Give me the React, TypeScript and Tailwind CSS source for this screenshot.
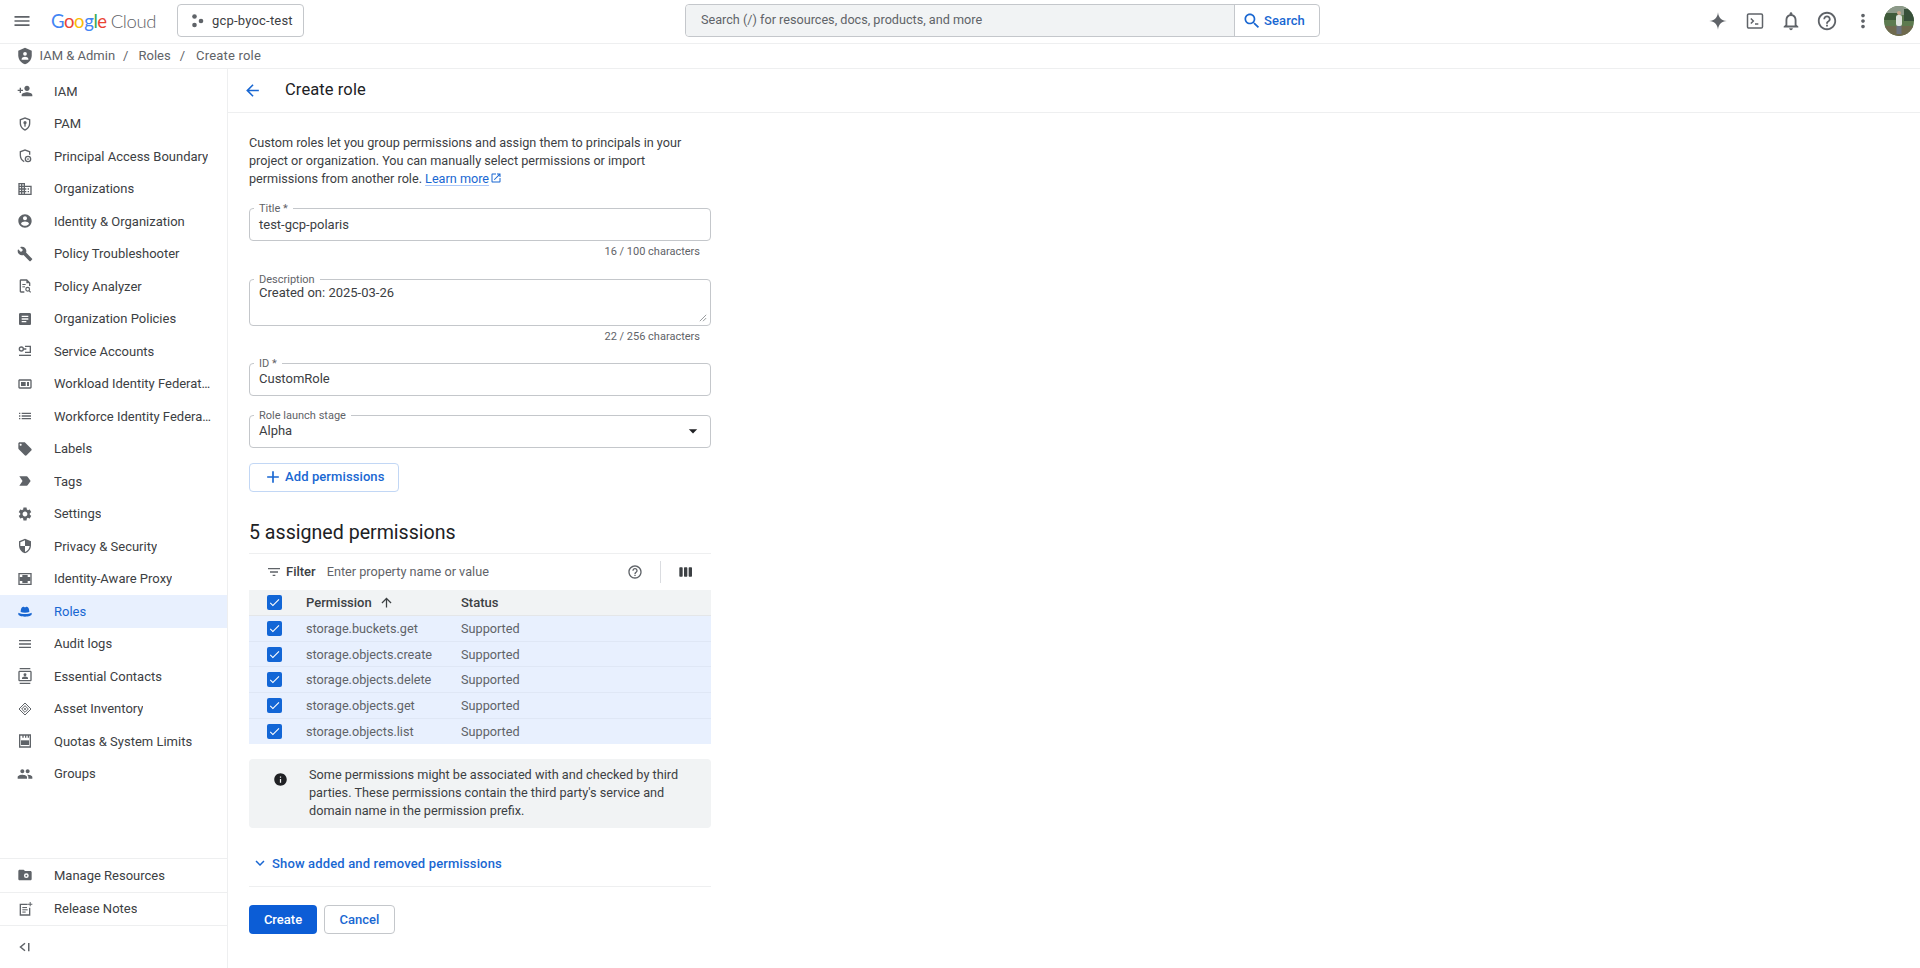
import type { ReactNode } from 'react'

const P = {
  menu: 'M3 18h18v-2H3v2zm0-5h18v-2H3v2zm0-7v2h18V6H3z',
  search: 'M15.5 14h-.79l-.28-.27C15.41 12.59 16 11.11 16 9.5 16 5.91 13.09 3 9.5 3S3 5.91 3 9.5 5.91 16 9.5 16c1.61 0 3.09-.59 4.23-1.57l.27.28v.79l5 4.99L20.49 19l-4.99-5zm-6 0C7.01 14 5 11.99 5 9.5S7.01 5 9.5 5 14 7.01 14 9.5 11.99 14 9.5 14z',
  spark: 'M12 1.5c.6 6.4 4.1 9.9 10.5 10.5-6.4.6-9.9 4.1-10.5 10.5C11.4 16.1 7.9 12.600 1.500 12 7.900 11.400 11.400 7.900 12 1.500z',
  bell: 'M12 22c1.1 0 2-.9 2-2h-4c0 1.1.9 2 2 2zm6-6v-5c0-3.07-1.63-5.64-4.5-6.32V4c0-.83-.67-1.5-1.5-1.5s-1.5.67-1.5 1.5v.68C7.64 5.36 6 7.92 6 11v5l-2 2v1h16v-1l-2-2zm-2 1H8v-6c0-2.48 1.51-4.5 4-4.5s4 2.02 4 4.5v6z',
  help: 'M11 18h2v-2h-2v2zm1-16C6.48 2 2 6.48 2 12s4.48 10 10 10 10-4.48 10-10S17.52 2 12 2zm0 18c-4.41 0-8-3.59-8-8s3.59-8 8-8 8 3.59 8 8-3.59 8-8 8zm0-14c-2.21 0-4 1.79-4 4h2c0-1.1.9-2 2-2s2 .9 2 2c0 2-3 1.750-3 5h2c0-2.250 3-2.500 3-5 0-2.210-1.790-4-4-4z',
  dots: 'M12 8c1.1 0 2-.9 2-2s-.9-2-2-2-2 .9-2 2 .9 2 2 2zm0 2c-1.1 0-2 .9-2 2s.9 2 2 2 2-.9 2-2-.9-2-2-2zm0 6c-1.1 0-2 .9-2 2s.9 2 2 2 2-.9 2-2-.9-2-2-2z',
  back: 'M20 11H7.83l5.59-5.59L12 4l-8 8 8 8 1.41-1.41L7.83 13H20v-2z',
  up: 'M4 12l1.41 1.41L11 7.83V20h2V7.83l5.58 5.59L20 12l-8-8-8 8z',
  add: 'M19 13h-6v6h-2v-6H5v-2h6V5h2v6h6v2z',
  external: 'M19 19H5V5h7V3H5c-1.11 0-2 .9-2 2v14c0 1.1.89 2 2 2h14c1.1 0 2-.9 2-2v-7h-2v7zM14 3v2h3.59l-9.83 9.83 1.41 1.41L19 6.41V10h2V3h-7z',
  filter: 'M10 18h4v-2h-4v2zM3 6v2h18V6H3zm3 7h12v-2H6v2z',
  columns: 'M6 5H3c-.55 0-1 .45-1 1v12c0 .55.45 1 1 1h3c.55 0 1-.45 1-1V6c0-.55-.45-1-1-1zm14 0h-3c-.55 0-1 .45-1 1v12c0 .55.45 1 1 1h3c.55 0 1-.45 1-1V6c0-.55-.45-1-1-1zm-7 0h-3c-.55 0-1 .45-1 1v12c0 .55.45 1 1 1h3c.55 0 1-.45 1-1V6c0-.55-.45-1-1-1z',
  info: 'M12 2C6.48 2 2 6.48 2 12s4.48 10 10 10 10-4.48 10-10S17.52 2 12 2zm1 15h-2v-6h2v6zm0-8h-2V7h2v2z',
  more: 'M16.59 8.59L12 13.17 7.41 8.59 6 10l6 6 6-6z',
  drop: 'M7 10l5 5 5-5z',
  check: 'M9 16.17L4.83 12l-1.41 1.41L9 19 21 7l-1.41-1.41z',
  personAdd: 'M15 12c2.21 0 4-1.79 4-4s-1.79-4-4-4-4 1.79-4 4 1.79 4 4 4zm-9-2V7H4v3H1v2h3v3h2v-3h3v-2H6zm9 4c-2.67 0-8 1.34-8 4v2h16v-2c0-2.66-5.33-4-8-4z',
  domain: 'M12 7V3H2v18h20V7H12zM6 19H4v-2h2v2zm0-4H4v-2h2v2zm0-4H4V9h2v2zm0-4H4V5h2v2zm4 12H8v-2h2v2zm0-4H8v-2h2v2zm0-4H8V9h2v2zm0-4H8V5h2v2zm10 12h-8v-2h2v-2h-2v-2h2v-2h-2V9h8v10zm-2-8h-2v2h2v-2zm0 4h-2v2h2v-2z',
  account: 'M12 2C6.48 2 2 6.48 2 12s4.48 10 10 10 10-4.48 10-10S17.52 2 12 2zm0 3c1.66 0 3 1.34 3 3s-1.34 3-3 3-3-1.34-3-3 1.34-3 3-3zm0 14.2c-2.5 0-4.71-1.28-6-3.22.03-1.99 4-3.08 6-3.08 1.99 0 5.97 1.09 6 3.08-1.29 1.94-3.5 3.22-6 3.22z',
  wrench: 'M22.7 19l-9.1-9.1c.9-2.3.4-5-1.5-6.9-2-2-5-2.4-7.4-1.3L9 6 6 9 1.6 4.7C.4 7.1.9 10.1 2.9 12.1c1.9 1.9 4.6 2.4 6.9 1.5l9.1 9.1c.4.4 1 .4 1.4 0l2.3-2.3c.5-.4.5-1.1.1-1.4z',
  article: 'M19 3H5c-1.1 0-2 .9-2 2v14c0 1.1.9 2 2 2h14c1.1 0 2-.9 2-2V5c0-1.1-.9-2-2-2zm-5 14H7v-2h7v2zm3-4H7v-2h10v2zm0-4H7V7h10v2z',
  list: 'M3 13h2v-2H3v2zm0 4h2v-2H3v2zm0-8h2V7H3v2zm4 4h14v-2H7v2zm0 4h14v-2H7v2zM7 7v2h14V7H7z',
  label: 'M21.41 11.58l-9-9C12.05 2.22 11.55 2 11 2H4c-1.1 0-2 .9-2 2v7c0 .55.22 1.05.59 1.42l9 9c.36.36.86.58 1.41.58.55 0 1.05-.22 1.41-.59l7-7c.37-.36.59-.86.59-1.41 0-.55-.23-1.06-.59-1.42zM5.5 7C4.67 7 4 6.33 4 5.5S4.67 4 5.5 4 7 4.67 7 5.5 6.33 7 5.5 7z',
  tag: 'M3.5 18.99l11 .01c.67 0 1.27-.33 1.63-.84L20.5 12l-4.37-6.16c-.36-.51-.96-.84-1.63-.84l-11 .01L8.34 12 3.5 18.99z',
  settings: 'M19.14 12.94c.04-.3.06-.61.06-.94 0-.32-.02-.64-.07-.94l2.03-1.58c.18-.14.23-.41.12-.61l-1.92-3.32c-.12-.22-.37-.29-.59-.22l-2.39.96c-.5-.38-1.03-.7-1.62-.94l-.36-2.54c-.04-.24-.24-.41-.48-.41h-3.84c-.24 0-.43.17-.47.41l-.36 2.54c-.59.24-1.13.57-1.62.94l-2.39-.96c-.22-.08-.47 0-.59.22L2.74 8.87c-.12.21-.08.47.12.61l2.03 1.58c-.05.3-.09.63-.09.94s.02.64.07.94l-2.03 1.58c-.18.14-.23.41-.12.61l1.92 3.32c.12.22.37.29.59.22l2.39-.96c.5.38 1.03.7 1.62.94l.36 2.54c.05.24.24.41.48.41h3.84c.24 0 .44-.17.47-.41l.36-2.54c.59-.24 1.13-.56 1.62-.94l2.39.96c.22.08.47 0 .59-.22l1.92-3.32c.12-.22.07-.47-.12-.61l-2.01-1.58zM12 15.6c-1.98 0-3.6-1.62-3.6-3.6s1.62-3.6 3.6-3.6 3.6 1.62 3.6 3.6-1.62 3.6-3.6 3.6z',
  security: 'M12 1L3 5v6c0 5.55 3.84 10.74 9 12 5.16-1.26 9-6.45 9-12V5l-9-4zm0 10.99h7c-.53 4.12-3.28 7.79-7 8.94V12H5V6.3l7-3.11v8.8z',
  lines: 'M3 6h18v2H3zm0 5h18v2H3zm0 5h18v2H3z',
  group: 'M16 11c1.66 0 2.99-1.34 2.99-3S17.66 5 16 5c-1.66 0-3 1.34-3 3s1.34 3 3 3zm-8 0c1.66 0 2.99-1.34 2.99-3S9.66 5 8 5C6.34 5 5 6.34 5 8s1.34 3 3 3zm0 2c-2.33 0-7 1.17-7 3.5V19h14v-2.5c0-2.33-4.67-3.5-7-3.5zm8 0c-.29 0-.62.02-.97.05 1.16.84 1.97 1.97 1.97 3.45V19h6v-2.5c0-2.33-4.67-3.5-7-3.5z',
}

function Icon({ d, className, children }: { d?: string; className?: string; children?: ReactNode }) {
  return (
    <svg viewBox="0 0 24 24" fill="currentColor" className={className}>
      {d && <path d={d} />}
      {children}
    </svg>
  )
}

const shieldOutline = 'M12 2 4 5v6c0 5 3.4 9.700 8 11 4.600-1.300 8-6 8-11V5l-8-3zm6 9c0 4-2.600 7.800-6 8.900-3.400-1.100-6-4.900-6-8.900V6.300l6-2.200 6 2.200V11z'

// the ones Material has no plain path for here
const customIcons: Record<string, ReactNode> = {
  pam: (
    <>
      <path d={shieldOutline} />
      <circle cx="12" cy="10" r="2.400" />
      <rect x="11" y="11" width="2" height="5" />
    </>
  ),
  pab: (
    <>
      <path d="M12 2 4 5v6c0 4.500 2.600 8.600 6.500 10.400l.7-1.900C8 18.200 6 14.800 6 11V6.300l6-2.200 6 2.200V10h2V5l-8-3z" />
      <circle cx="16.500" cy="16.500" r="4" fill="none" stroke="currentColor" strokeWidth="2" />
      <circle cx="16.500" cy="16.500" r="1.300" />
    </>
  ),
  analyzer: (
    <>
      <path d="M6 2h9l5 5v5h-2V8h-4V4H6v16h5v2H6c-1.100 0-2-.9-2-2V4c0-1.100.9-2 2-2z" />
      <rect x="8" y="9" width="5" height="1.500" />
      <rect x="8" y="12.500" width="4" height="1.500" />
      <circle cx="16" cy="17" r="2.800" fill="none" stroke="currentColor" strokeWidth="1.800" />
      <path d="m18 19 2.500 2.500" stroke="currentColor" strokeWidth="1.800" />
    </>
  ),
  service: (
    <>
      <circle cx="6.500" cy="9" r="3" fill="none" stroke="currentColor" strokeWidth="2" />
      <path d="M9.500 8h4.500v2H9.500zM12 4h9v11h-9v-2h7V6h-7z" />
      <rect x="3" y="17.500" width="18" height="2" />
    </>
  ),
  workload: (
    <>
      <path d="M20 5H4c-1.100 0-2 .9-2 2v10c0 1.100.9 2 2 2h16c1.100 0 2-.9 2-2V7c0-1.100-.9-2-2-2zm0 12H4V7h16v10z" />
      <rect x="6" y="9" width="7" height="6" />
      <rect x="15" y="9" width="3" height="6" />
    </>
  ),
  iap: (
    <>
      <path d="M2 3h20v18H2V3zm2 2v14h16V5H4z" />
      <rect x="4" y="9" width="16" height="6" />
      <rect x="8" y="6" width="8" height="12" />
    </>
  ),
  roles: (
    <>
      <path d="M5.500 13.500c0-4.800 1.400-8 3.700-8 1.100 0 1.800.9 2.800.9s1.700-.9 2.800-.9c2.300 0 3.700 3.200 3.700 8-1.800.7-3.900 1-6.500 1s-4.700-.3-6.500-1z" />
      <path d="M2 14.500c2.300 1.300 5.800 2 10 2s7.700-.7 10-2V17c0 1.900-4.400 3.500-10 3.500S2 18.900 2 17v-2.500z" />
    </>
  ),
  contacts: (
    <>
      <path d="M4 0h16v2H4zM4 22h16v2H4zM20 4H4c-1.100 0-2 .9-2 2v12c0 1.100.9 2 2 2h16c1.100 0 2-.9 2-2V6c0-1.100-.9-2-2-2zm0 14H4V6h16v12z" />
      <circle cx="12" cy="10" r="2.200" />
      <path d="M7.500 16.500V15c0-1.500 3-2.300 4.500-2.300s4.500.8 4.500 2.300v1.500z" />
    </>
  ),
  inventory: (
    <>
      <path d="M12 3 21 12 12 21 3 12z" fill="none" stroke="currentColor" strokeWidth="1.500" />
      <path d="M12 7 17 12 12 17 7 12z" fill="none" stroke="currentColor" strokeWidth="1.500" />
      <path d="M12 10 14 12 12 14 10 12z" />
    </>
  ),
  quotas: (
    <>
      <path d="M3 2h18v20H3V2zm2 2v16h14V4h-1v3h-2V4h-2v3h-2V4h-2v3H8V4H5z" />
      <rect x="6" y="11" width="12" height="7" />
    </>
  ),
  manage: (
    <>
      <path d="M20 6h-8l-2-2H4c-1.100 0-1.990.9-1.990 2L2 18c0 1.100.9 2 2 2h16c1.100 0 2-.9 2-2V8c0-1.100-.9-2-2-2z" />
      <circle cx="14" cy="13" r="3.600" fill="#fff" />
      <circle cx="14" cy="13" r="1.400" />
    </>
  ),
  notes: (
    <>
      <path d="M4 4h12v2H6v14h12V10h2v12H4V4z" />
      <rect x="8" y="9" width="7" height="1.600" />
      <rect x="8" y="12.400" width="8" height="1.600" />
      <rect x="8" y="15.800" width="5" height="1.600" />
      <path d="M19 1.500h1.500V4H23v1.500h-2.500V8H19V5.500h-2.500V4H19z" />
    </>
  ),
}

const navItems: { label: string; d?: string; custom?: string; active?: boolean }[] = [
  { label: 'IAM', d: P.personAdd },
  { label: 'PAM', custom: 'pam' },
  { label: 'Principal Access Boundary', custom: 'pab' },
  { label: 'Organizations', d: P.domain },
  { label: 'Identity & Organization', d: P.account },
  { label: 'Policy Troubleshooter', d: P.wrench },
  { label: 'Policy Analyzer', custom: 'analyzer' },
  { label: 'Organization Policies', d: P.article },
  { label: 'Service Accounts', custom: 'service' },
  { label: 'Workload Identity Federation', custom: 'workload' },
  { label: 'Workforce Identity Federation', d: P.list },
  { label: 'Labels', d: P.label },
  { label: 'Tags', d: P.tag },
  { label: 'Settings', d: P.settings },
  { label: 'Privacy & Security', d: P.security },
  { label: 'Identity-Aware Proxy', custom: 'iap' },
  { label: 'Roles', custom: 'roles', active: true },
  { label: 'Audit logs', d: P.lines },
  { label: 'Essential Contacts', custom: 'contacts' },
  { label: 'Asset Inventory', custom: 'inventory' },
  { label: 'Quotas & System Limits', custom: 'quotas' },
  { label: 'Groups', d: P.group },
]

const permissions = [
  'storage.buckets.get',
  'storage.objects.create',
  'storage.objects.delete',
  'storage.objects.get',
  'storage.objects.list',
]

function NavRow({ item }: { item: (typeof navItems)[number] }) {
  return (
    <div className={`flex h-[32.5px] items-center pl-[17px] pr-[15px] ${item.active ? 'bg-[#e8f0fe] text-[#1967d2]' : 'text-[#3c4043]'}`}>
      <Icon d={item.d} className={`h-4 w-4 shrink-0 ${item.active ? '' : 'text-[#5f6368]'}`}>
        {item.custom && customIcons[item.custom]}
      </Icon>
      <span className="ml-[21px] truncate">{item.label}</span>
    </div>
  )
}

function Checkbox() {
  return (
    <span className="flex h-[15px] w-[15px] items-center justify-center rounded-[2px] bg-[#1266d6] text-white">
      <Icon d={P.check} className="h-[13px] w-[13px]" />
    </span>
  )
}

function Field({ label, children, className }: { label: string; children: ReactNode; className?: string }) {
  return (
    <div className={`relative rounded-[4px] border border-[#c4c7cb] px-[9px] text-[13px] text-[#3c4043] ${className ?? ''}`}>
      <span className="absolute -top-[7px] left-[4px] bg-white px-[5px] text-[11px] leading-[13px] text-[#5f6368]">{label}</span>
      {children}
    </div>
  )
}

function Counter({ children }: { children: ReactNode }) {
  return <div className="mt-1 h-[14px] pr-[11px] text-right text-[11px] leading-[14px] text-[#5f6368]">{children}</div>
}

export default function App() {
  return (
    <div className="flex h-screen w-full flex-col overflow-hidden bg-white font-[Roboto,sans-serif] text-[13px] text-[#3c4043]">
      {/* top bar */}
      <header className="flex h-[44px] shrink-0 items-center border-b border-[#eeeff0] pl-3 pr-[6px]">
        <Icon d={P.menu} className="mt-[-2px] h-[20px] w-[20px] shrink-0 text-[#5f6368]" />
        <div className="ml-[19px] mt-[-2px] w-[106px] shrink-0 font-[Lato,sans-serif] text-[18.5px] leading-[24px] tracking-[-0.4px]">
          <span className="text-[#4285f4]">G</span>
          <span className="text-[#ea4335]">o</span>
          <span className="text-[#fbbc05]">o</span>
          <span className="text-[#4285f4]">g</span>
          <span className="text-[#34a853]">l</span>
          <span className="text-[#ea4335]">e</span>
          <span className="ml-[4px] font-light text-[#5f6368]">Cloud</span>
        </div>
        <div className="ml-[20px] mt-[-2px] flex h-[33px] w-[127px] shrink-0 items-center rounded-[4px] border border-[#c4c7cb] pl-[13px] text-[#3c4043]">
          <svg viewBox="0 0 14 14" fill="#5f6368" className="h-[14px] w-[14px]">
            <circle cx="3.500" cy="2.500" r="2.300" />
            <circle cx="3.500" cy="11" r="2.300" />
            <circle cx="10" cy="7" r="2.300" />
          </svg>
          <span className="ml-[7px] tracking-[0.2px]">gcp-byoc-test</span>
        </div>
        <div className="ml-[381px] mt-[-2px] flex h-[33px] w-[635px] shrink-0 items-center rounded-[4px] border border-[#c4c7cb]">
          <div className="flex h-full flex-1 items-center rounded-l-[4px] bg-[#f1f3f4] pl-[15px] text-[12.65px] text-[#5f6368]">Search (/) for resources, docs, products, and more</div>
          <div className="flex h-full w-[85px] items-center border-l border-[#c4c7cb] pl-[7px] font-medium tracking-[0.1px] text-[#1967d2]">
            <Icon d={P.search} className="h-[20px] w-[20px]" />
            <span className="ml-[2px]">Search</span>
          </div>
        </div>
        <div className="ml-auto mt-[-2px] flex items-center text-[#5f6368]">
          <Icon d={P.spark} className="h-[20px] w-[20px]" />
          <svg viewBox="0 0 24 24" fill="none" stroke="currentColor" strokeWidth="1.800" className="ml-[17px] h-[20px] w-[20px]">
            <rect x="3" y="3.500" width="18" height="17" rx="1.500" />
            <path d="m7 9 3 3-3 3M12 15.500h4" />
          </svg>
          <Icon d={P.bell} className="ml-[15px] h-[22px] w-[22px]" />
          <Icon d={P.help} className="ml-[14px] h-[22px] w-[22px]" />
          <Icon d={P.dots} className="ml-[14px] h-[22px] w-[22px]" />
          <svg viewBox="0 0 30 30" className="ml-[10px] h-[30px] w-[30px] shrink-0 rounded-full">
            <rect width="30" height="30" fill="#5d7a4f" />
            <rect width="30" height="9" fill="#8d9a8a" />
            <rect y="7" width="14" height="7" fill="#3f5a3a" />
            <rect x="20" y="3" width="10" height="12" fill="#37503a" />
            <rect y="20" width="30" height="10" fill="#6f6a4e" />
            <rect x="12" y="9" width="6" height="11" rx="2" fill="#dfe3dd" />
            <circle cx="15" cy="7" r="2" fill="#c9a68c" />
            <rect x="12.500" y="20" width="5" height="8" fill="#6d7380" />
          </svg>
        </div>
      </header>

      {/* breadcrumb */}
      <div className="flex h-[25px] shrink-0 items-center border-b border-[#eeeff0] pl-4 text-[#5f6368]">
        <svg viewBox="0 0 24 24" className="h-[18px] w-[18px] shrink-0">
          <path fill="#5f6368" d="M12 1 3 5v6c0 5.550 3.840 10.740 9 12 5.160-1.260 9-6.450 9-12V5l-9-4z" />
          <circle cx="12" cy="9" r="2.500" fill="#fff" />
          <path fill="#fff" d="M7.500 16c0-2 3-3 4.500-3s4.500 1 4.500 3v1h-9z" />
        </svg>
        <span className="ml-[5.5px]">IAM &amp; Admin</span>
        <span className="ml-[8px]">/</span>
        <span className="ml-[10px]">Roles</span>
        <span className="ml-[9px]">/</span>
        <span className="ml-[11px] tracking-[0.2px]">Create role</span>
      </div>

      <div className="flex min-h-0 flex-1">
        {/* sidebar */}
        <aside className="flex w-[228px] shrink-0 flex-col border-r border-[#eeeff0] pt-[6px]">
          {navItems.map(item => <NavRow key={item.label} item={item} />)}
          <div className="mt-auto border-t border-[#eeeff0]">
            <NavRow item={{ label: 'Manage Resources', custom: 'manage' }} />
          </div>
          <div className="border-t border-[#eeeff0]">
            <NavRow item={{ label: 'Release Notes', custom: 'notes' }} />
          </div>
          <div className="flex h-[43px] items-center border-t border-[#eeeff0] pl-[16px] text-[#5f6368]">
            <svg viewBox="0 0 24 24" fill="none" stroke="currentColor" strokeWidth="2" className="h-[18px] w-[18px]">
              <path d="m12 7-6 5 6 5M17 6.500v11" />
            </svg>
          </div>
        </aside>

        <main className="min-w-0 flex-1">
          <div className="flex h-[44px] items-center border-b border-[#eeeff0] pl-[15px]">
            <Icon d={P.back} className="h-[19px] w-[19px] text-[#1967d2]" />
            <h1 className="ml-[23px] text-[16.5px] font-normal tracking-[0.1px] text-[#202124]">Create role</h1>
          </div>

          <div className="ml-[21px] w-[462px] pt-[21px]">
            <p className="text-[12.65px] leading-[18px]">
              Custom roles let you group permissions and assign them to principals in your project or organization. You can manually select permissions or import permissions from another role.{' '}
              <span className="text-[#1967d2] underline decoration-[#a8c7fa] underline-offset-2">Learn more</span>
              <Icon d={P.external} className="ml-[1px] inline h-[12px] w-[12px] align-[-1px] text-[#1967d2]" />
            </p>

            <Field label="Title *" className="mt-[20px] flex h-[33px] items-center pt-[1px]">test-gcp-polaris</Field>
            <Counter>16 / 100 characters</Counter>

            <Field label="Description" className="relative mt-[20px] h-[47px] pt-[5px] leading-[16px]">
              Created on: 2025-03-26
              <svg viewBox="0 0 10 10" fill="none" stroke="#5f6368" strokeWidth="0.800" className="absolute bottom-[3px] right-[3px] h-[8px] w-[8px]">
                <path d="M9 1 1 9M9 5 5 9" />
              </svg>
            </Field>
            <Counter>22 / 256 characters</Counter>

            <Field label="ID *" className="mt-[18.5px] flex h-[33px] items-center">CustomRole</Field>

            <Field label="Role launch stage" className="mt-[19px] flex h-[33px] items-center justify-between">
              Alpha
              <Icon d={P.drop} className="mr-[-2px] h-[20px] w-[20px] text-[#202124]" />
            </Field>

            <button className="mt-[15px] flex h-[29px] w-[150px] items-center rounded-[4px] border border-[#c2d7f5] pl-[13px] font-medium tracking-[0.1px] text-[#1967d2]">
              <Icon d={P.add} className="h-[20px] w-[20px]" />
              <span className="ml-[2px]">Add permissions</span>
            </button>

            <h2 className="mt-[29px] text-[19.6px] font-normal leading-[24px] text-[#202124]">5 assigned permissions</h2>

            <div className="mt-[8px] flex h-[37px] items-center border-t border-[#eeeff0] pl-[17px]">
              <Icon d={P.filter} className="h-[16px] w-[16px] text-[#5f6368]" />
              <span className="ml-[4px] font-medium text-[#3c4043]">Filter</span>
              <span className="ml-[11px] text-[12.7px] text-[#5f6368]">Enter property name or value</span>
              <Icon d={P.help} className="ml-auto h-[16px] w-[16px] text-[#5f6368]" />
              <span className="ml-[17px] h-[22px] w-px bg-[#dadce0]" />
              <Icon d={P.columns} className="ml-[17px] mr-[17px] h-[16px] w-[16px] text-[#3c4043]" />
            </div>

            <table className="w-full table-fixed border-collapse">
              <thead className="bg-[#f1f3f4]">
                <tr className="h-[26px] border-b border-[#e4e6e8] text-left font-medium text-[#3c4043]">
                  <th className="w-[57px] pl-[18px] font-medium"><Checkbox /></th>
                  <th className="w-[155px] font-medium">
                    <span className="flex items-center">Permission<Icon d={P.up} className="ml-[7px] h-[15px] w-[15px]" /></span>
                  </th>
                  <th className="font-medium">Status</th>
                </tr>
              </thead>
              <tbody className="text-[12.7px]">
                {permissions.map(p => (
                  <tr key={p} className="h-[25.700px] border-b border-[#dfe7f5] bg-[#e8f0fe] text-[#5f6368] last:border-b-0">
                    <td className="pl-[18px]"><Checkbox /></td>
                    <td>{p}</td>
                    <td>Supported</td>
                  </tr>
                ))}
              </tbody>
            </table>

            <div className="mt-[15.5px] flex h-[69px] rounded-[4px] bg-[#f1f3f4] pl-[24px] pr-3 pt-[7px] text-[12.7px] leading-[18px]">
              <Icon d={P.info} className="mt-[6px] h-[15px] w-[15px] shrink-0 text-[#202124]" />
              <p className="ml-[21px]">Some permissions might be associated with and checked by third parties. These permissions contain the third party's service and domain name in the permission prefix.</p>
            </div>

            <div className="mt-[25px] flex h-[20px] items-center pl-[2px] font-medium tracking-[0.15px] text-[#1967d2]">
              <Icon d={P.more} className="h-[18px] w-[18px]" />
              <span className="ml-[3px]">Show added and removed permissions</span>
            </div>

            <div className="mt-[13px] border-t border-[#eeeff0]" />

            <div className="mt-[18px] flex gap-[7px]">
              <button className="h-[29px] w-[68px] rounded-[4px] bg-[#0c5dd6] font-medium text-white">Create</button>
              <button className="h-[29px] w-[71px] rounded-[4px] border border-[#c4c7cb] font-medium text-[#1967d2]">Cancel</button>
            </div>
          </div>
        </main>
      </div>
    </div>
  )
}
